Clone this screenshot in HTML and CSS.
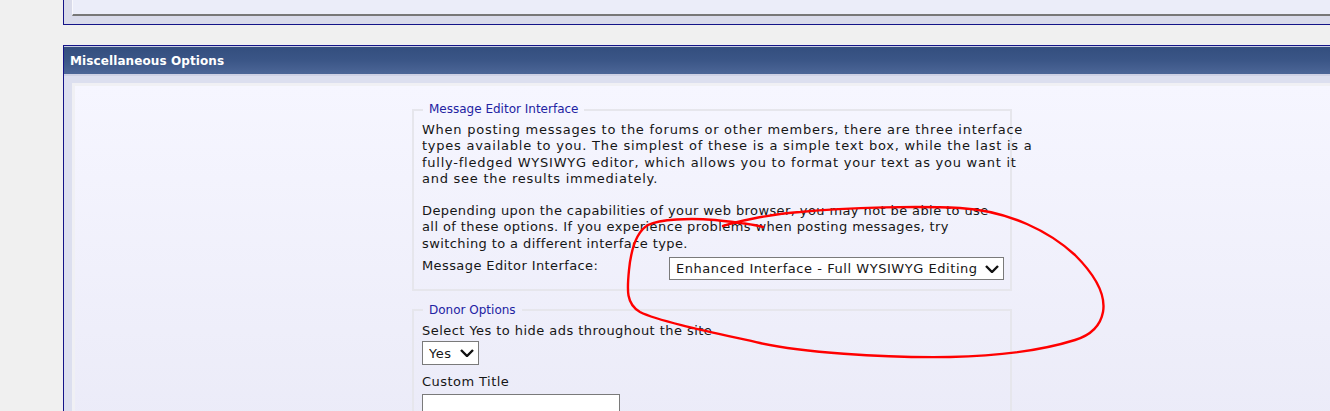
FILE: index.html
```html
<!DOCTYPE html>
<html lang="en">
<head>
    <meta charset="UTF-8">
    <title>Edit Options - Miscellaneous Options</title>
    <link rel="stylesheet" href="styles.css">
</head>
<body>
    <div class="wrap">
        <div class="panel panel-top">
            <div class="panel-box"></div>
        </div>

        <div class="panel">
            <div class="panel-head">Miscellaneous Options</div>
            <div class="panel-inner">
                <div class="panel-box">
                    <fieldset class="group">
                        <legend>Message Editor Interface</legend>
                        <p>When posting messages to the forums or other members, there are three interface<br>
                        types available to you. The simplest of these is a simple text box, while the last is a<br>
                        fully-fledged WYSIWYG editor, which allows you to format your text as you want it<br>
                        and see the results immediately.</p>
                        <p class="note">Depending upon the capabilities of your web browser, you may not be able to use<br>
                        all of these options. If you experience problems when posting messages, try<br>
                        switching to a different interface type.</p>
                        <div class="field-row">
                            <label class="field-label" for="editorMode">Message Editor Interface:</label>
                            <div class="select-wrap">
                                <select id="editorMode" class="select select-wide">
                                    <option>Enhanced Interface - Full WYSIWYG Editing</option>
                                    <option>Standard Editor - Extra Formatting Controls</option>
                                    <option>Basic Editor - Simple Text Box</option>
                                </select>
                                <svg class="chevron" viewBox="0 0 14 8" width="14" height="8"><path d="M1 1 L7 7 L13 1" fill="none" stroke="#111" stroke-width="2.4"/></svg>
                            </div>
                        </div>
                    </fieldset>

                    <fieldset class="group group-donor">
                        <legend>Donor Options</legend>
                        <div class="field-text">Select Yes to hide ads throughout the site</div>
                        <div class="select-wrap">
                            <select class="select select-small">
                                <option>Yes</option>
                                <option>No</option>
                            </select>
                            <svg class="chevron" viewBox="0 0 14 8" width="14" height="8"><path d="M1 1 L7 7 L13 1" fill="none" stroke="#111" stroke-width="2.4"/></svg>
                        </div>
                        <div class="field-text field-gap">Custom Title</div>
                        <input type="text" class="text-input">
                    </fieldset>
                </div>
            </div>
        </div>
    </div>

    <!-- red marker circle drawn over the screenshot -->
    <svg class="scribble" width="1330" height="411" viewBox="0 0 1330 411">
        <path d="M723,226 C735,222 770,214 800,212 C850,207 920,206 960,208 C1010,211 1050,232 1075,255 C1095,275 1106,295 1103,312 C1100,328 1088,336 1075,340 C1040,351 1000,356 950,357 C880,358 800,352 760,343 C720,334 660,322 640,312 C626,304 627,290 629,270 C631,250 636,232 648,225 C660,219 690,218 715,220 C735,222 752,224 763,227" fill="none" stroke="#f00" stroke-width="2.4" stroke-linecap="round"/>
    </svg>
</body>
</html>
```

FILE: styles.css
```css
* {
    box-sizing: border-box;
}

body {
    margin: 0;
    font-family: 'DejaVu Sans', Verdana, sans-serif;
    font-size: 13px;
    line-height: 1.25;
    color: #161616;
    background-color: #f0f0f0;
    overflow: hidden;
    height: 411px;
}

.wrap {
    margin-left: 63px;
    width: 1300px;
}

.panel {
    border: 1px solid #141488;
    background-color: #dcdfef;
}

.panel-top {
    border-top: none;
    background-color: #d9dbea;
    padding: 0 8px 8px 8px;
    margin-bottom: 20px;
}

.panel-top .panel-box {
    height: 16px;
    background-color: #ebedf9;
    border-left: 1px solid #f8f8fc;
    border-bottom: 2px solid #777;
}

.panel-head {
    height: 30px;
    border-top: 1px solid #c6cce2;
    border-bottom: 2px solid #cfd2e5;
    background: linear-gradient(to bottom, #334e7e 0%, #3b5687 50%, #4c6697 100%);
    color: #fff;
    font-weight: bold;
    font-size: 12px;
    letter-spacing: 0.1px;
    line-height: 29px;
    padding-left: 6px;
}

.panel-inner {
    padding: 7px 8px 0 8px;
}

.panel-inner .panel-box {
    border-top: 3px solid #f0f0f4;
    border-left: 3px solid #f0f0f4;
    border-right: 3px solid #f0f0f4;
    background: linear-gradient(to bottom, #f6f6ff 0%, #ebebf8 100%);
    height: 340px;
    padding: 16px 2px 0 0;
}

.group {
    width: 600px;
    min-width: 0;
    margin: 0 auto;
    border: 2px solid #e6e6ec;
    padding: 5px 8px 9px 8px;
}

.group legend {
    color: #2222a2;
    font-size: 12px;
    padding: 0 6px;
    margin-left: 1px;
}

.group p {
    margin: 0 0 16px 0;
    white-space: nowrap;
    letter-spacing: 0.75px;
}

.group p.note {
    margin-bottom: 5px;
    letter-spacing: 0.4px;
}

.group-donor {
    margin-top: 12px;
}

.field-row {
    display: flex;
    align-items: flex-start;
}

.field-label {
    width: 247px;
    flex-shrink: 0;
    padding-top: 1px;
    letter-spacing: 0.4px;
}

.select-wrap {
    position: relative;
    display: inline-block;
}

.select {
    appearance: none;
    -webkit-appearance: none;
    font-family: 'DejaVu Sans', Verdana, sans-serif;
    font-size: 13px;
    letter-spacing: 0.55px;
    color: #161616;
    background-color: #fff;
    border: 1px solid #7a7a7a;
    border-radius: 0;
    height: 23px;
    padding: 0 0 0 6px;
    margin: 0;
}

.select-wide {
    width: 335px;
}

.select-small {
    width: 57px;
    height: 24px;
    margin-top: 2px;
}

.chevron {
    position: absolute;
    right: 5px;
    top: 8px;
    pointer-events: none;
}

.select-small + .chevron {
    top: 10px;
}

.field-text {
    white-space: nowrap;
    letter-spacing: 0.45px;
}

.field-gap {
    margin-top: 9px;
}

.text-input {
    display: block;
    width: 198px;
    height: 24px;
    margin-top: 4px;
    border: 1px solid #7a7a7a;
    background-color: #fff;
}

.scribble {
    position: absolute;
    left: 0;
    top: 0;
    pointer-events: none;
}
```
